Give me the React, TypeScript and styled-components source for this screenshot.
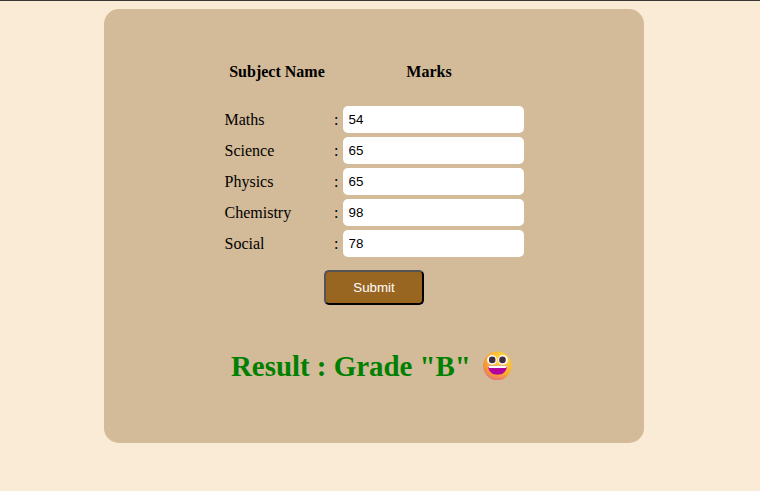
import React, { useState } from "react";
import styled, { createGlobalStyle } from "styled-components";

const GlobalStyle = createGlobalStyle`
  * { box-sizing: border-box; }
  body {
    margin: 0;
    background: #faebd7;
    font-family: "Liberation Serif", "Times New Roman", serif;
    font-size: 16px;
    color: #000;
  }
`;

const Page = styled.main`
  height: 491px;
  padding: 8px 0 0 104px;
  border-top: 1px solid #3b3636;
  overflow: hidden;
`;

const Card = styled.form`
  display: flex;
  flex-direction: column;
  width: 540px;
  height: 434px;
  padding: 54px 120px 0;
  border-radius: 15px;
  background: #d3ba98;
`;

const Header = styled.div`
  display: grid;
  grid-template-columns: 106px 1fr;
  column-gap: 4px;
  height: 43px;
  line-height: 18px;
  font-weight: bold;
  text-align: center;
`;

const HeaderCell = styled.span`
  white-space: nowrap;
`;

const Rows = styled.div`
  display: grid;
  row-gap: 4px;
`;

const Row = styled.label`
  display: grid;
  grid-template-columns: 110px 9px 181px;
  align-items: center;
  height: 27px;
  line-height: 18px;
`;

const SubjectName = styled.span`
  padding-left: 0.5px;
`;

const Colon = styled.span``;

const MarkInput = styled.input`
  width: 181px;
  height: 27px;
  padding: 0 5.5px;
  border: 0;
  border-radius: 5px;
  outline: 0;
  background: #fff;
  color: #000;
  font: 13.333px "Liberation Sans", Arial, sans-serif;
`;

const SubmitButton = styled.button`
  align-self: center;
  width: 100px;
  height: 35px;
  margin-top: 13px;
  padding: 0;
  border: 2px outset #000;
  border-radius: 5px;
  background: #996622;
  color: #fff;
  font: 13.333px "Liberation Sans", Arial, sans-serif;
`;

const Result = styled.h1`
  display: flex;
  align-items: center;
  gap: 12px;
  height: 33px;
  margin: 45px 0 0 7px;
  color: #008000;
  font-size: 28.9px;
  line-height: 33px;
  white-space: nowrap;
`;

const Face = styled.svg`
  flex: none;
  width: 29px;
  height: 30px;
  margin-bottom: 1px;
`;

function GrinningFace() {
  return (
    <Face viewBox="0 0 29 30" role="img" aria-label="Grinning face">
      <defs>
        <radialGradient id="skin" cx="0.7" cy="0.28" r="0.82">
          <stop offset="0" stopColor="#ffdf45" />
          <stop offset="0.55" stopColor="#ffb52f" />
          <stop offset="0.82" stopColor="#f59537" />
          <stop offset="1" stopColor="#e5767b" />
        </radialGradient>
        <linearGradient id="chin" x1="0" y1="0" x2="0" y2="1">
          <stop offset="0.8" stopColor="#ef6f8e" stopOpacity="0" />
          <stop offset="1" stopColor="#e96b88" stopOpacity="0.7" />
        </linearGradient>
      </defs>
      <ellipse cx="14.3" cy="14.8" rx="14.2" ry="14.3" fill="url(#skin)" />
      <ellipse cx="14.3" cy="14.8" rx="14.2" ry="14.3" fill="url(#chin)" />
      <circle cx="9" cy="8.9" r="4.9" fill="#fff" />
      <circle cx="19.9" cy="8.9" r="4.9" fill="#fff" />
      <circle cx="9.2" cy="8.9" r="3.3" fill="#442b3f" />
      <circle cx="19.5" cy="8.9" r="3.3" fill="#442b3f" />
      <path d="M5.2 14.7H23.8C24 20.3 20 23.7 14.5 23.7S5 20.3 5.2 14.7Z" fill="#b4009e" />
      <path d="M5.2 14.7H23.8C23.8 16 23.2 16.9 22.2 16.9H6.8C5.8 16.9 5.2 16 5.2 14.7Z" fill="#fff" />
    </Face>
  );
}

const subjects = [
  { name: "Maths", mark: "54" },
  { name: "Science", mark: "65" },
  { name: "Physics", mark: "65" },
  { name: "Chemistry", mark: "98" },
  { name: "Social", mark: "78" },
];

export default function App() {
  const [marks, setMarks] = useState(subjects.map((s) => s.mark));

  const update = (index: number, value: string) =>
    setMarks((current) => current.map((m, i) => (i === index ? value : m)));

  return (
    <>
      <GlobalStyle />
      <Page>
        <Card onSubmit={(event) => event.preventDefault()}>
          <Header>
            <HeaderCell>Subject Name</HeaderCell>
            <HeaderCell>Marks</HeaderCell>
          </Header>
          <Rows>
            {subjects.map(({ name }, index) => (
              <Row key={name}>
                <SubjectName>{name}</SubjectName>
                <Colon>:</Colon>
                <MarkInput
                  value={marks[index]}
                  onChange={(event) => update(index, event.target.value)}
                />
              </Row>
            ))}
          </Rows>
          <SubmitButton type="submit">Submit</SubmitButton>
          <Result>
            Result : Grade "B"
            <GrinningFace />
          </Result>
        </Card>
      </Page>
    </>
  );
}
